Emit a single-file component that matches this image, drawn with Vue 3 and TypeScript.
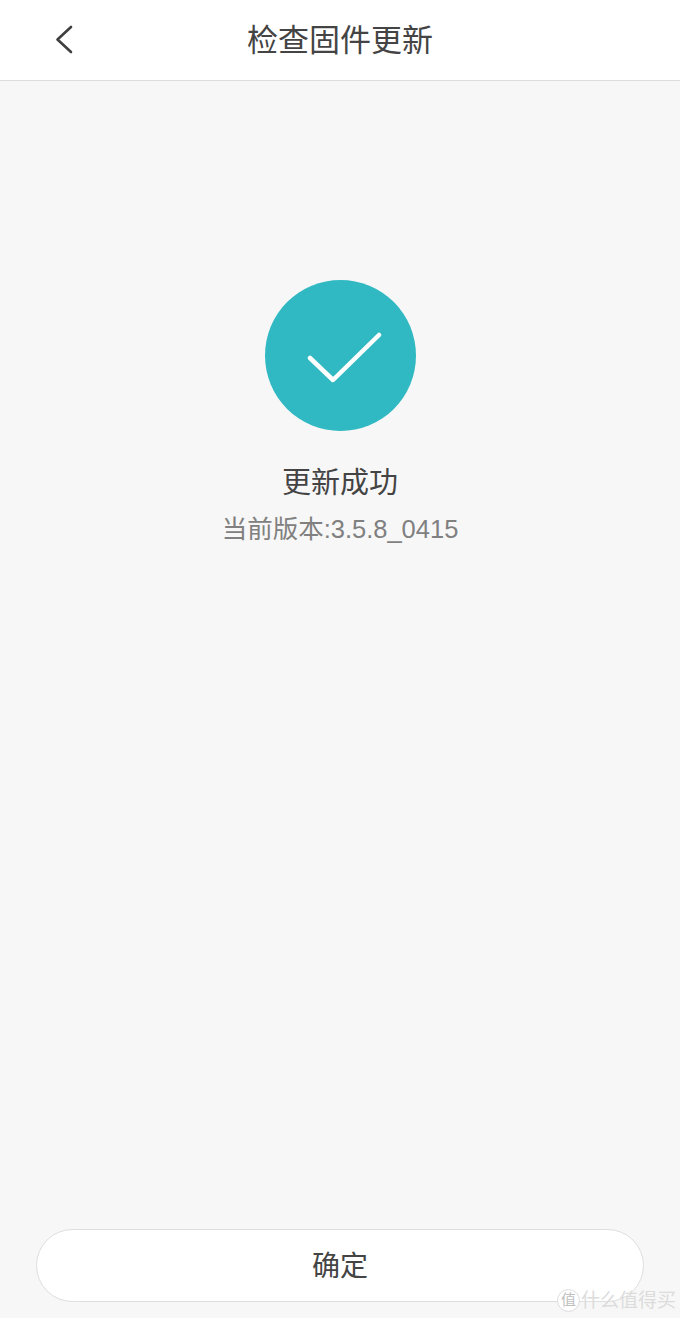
<script setup lang="ts">
const title = '检查固件更新'
const version = '3.5.8_0415'
</script>

<template>
  <div class="page">
    <header class="topbar">
      <button class="back" aria-label="返回">
        <svg width="20" height="30" viewBox="0 0 20 30" fill="none">
          <path d="M16 2 L2.5 14.5 L16 27" stroke="#3f3f3f" stroke-width="2.6" stroke-linecap="round" stroke-linejoin="round" />
        </svg>
      </button>
      <h1 class="title">{{ title }}</h1>
    </header>

    <main class="content">
      <div class="badge">
        <svg width="84" height="56" viewBox="0 0 84 56" fill="none">
          <path d="M12 30 L35 52 L81 7" stroke="#fff" stroke-width="4.5" stroke-linecap="round" stroke-linejoin="round" />
        </svg>
      </div>
      <p class="status">更新成功</p>
      <p class="ver">当前版本:{{ version }}</p>
    </main>

    <footer class="bottom">
      <button class="ok">确定</button>
      <div class="mark">
        <span class="mark-logo">值</span>
        <span class="mark-text">什么值得买</span>
      </div>
    </footer>
  </div>
</template>

<style scoped>
.page {
  width: 680px;
  height: 1318px;
  background: #f7f7f7;
  display: flex;
  flex-direction: column;
  font-family: "Liberation Sans", "Noto Sans CJK SC", sans-serif;
  overflow: hidden;
}

.topbar {
  height: 81px;
  box-sizing: border-box;
  background: #fff;
  border-bottom: 1px solid #dcdcdc;
  display: flex;
  align-items: center;
  justify-content: center;
  position: relative;
  flex-shrink: 0;
}
.back {
  position: absolute;
  left: 55px;
  top: 25px;
  width: 20px;
  height: 30px;
  padding: 0;
  border: none;
  background: none;
  display: flex;
}
.title {
  margin: 2px 0 0;
  font-size: 31px;
  font-weight: 400;
  color: #444;
  line-height: 76px;
}

.content {
  flex: 1;
  display: flex;
  flex-direction: column;
  align-items: center;
  padding-top: 199px;
}
.badge {
  width: 151px;
  height: 151px;
  border-radius: 50%;
  background: #31b9c3;
  display: flex;
  align-items: center;
  justify-content: center;
}
.status {
  margin: 32px 0 0;
  font-size: 29px;
  line-height: 40px;
  color: #444;
}
.ver {
  margin: 9px 0 0;
  font-size: 25.5px;
  line-height: 34px;
  color: #808080;
}

.bottom {
  height: 89px;
  position: relative;
  flex-shrink: 0;
  padding: 0 36px;
}
.ok {
  display: block;
  width: 608px;
  height: 73px;
  box-sizing: border-box;
  border: 1px solid #dedede;
  border-radius: 37px;
  background: #fff;
  font-family: inherit;
  font-size: 28px;
  color: #444;
  padding: 0 0 4px;
}

.mark {
  position: absolute;
  left: 557px;
  top: 60px;
  display: flex;
  align-items: center;
  gap: 1px;
}
.mark-logo {
  width: 21px;
  height: 21px;
  border-radius: 50%;
  background: #fff;
  border: 1px solid #dcdcdc;
  color: #c0c0c0;
  font-size: 15px;
  line-height: 20px;
  text-align: center;
}
.mark-text {
  font-size: 19px;
  line-height: 22px;
  color: #dcdcdc;
  white-space: nowrap;
}
</style>

<style>
html, body { margin: 0; background: #f7f7f7; }
</style>
